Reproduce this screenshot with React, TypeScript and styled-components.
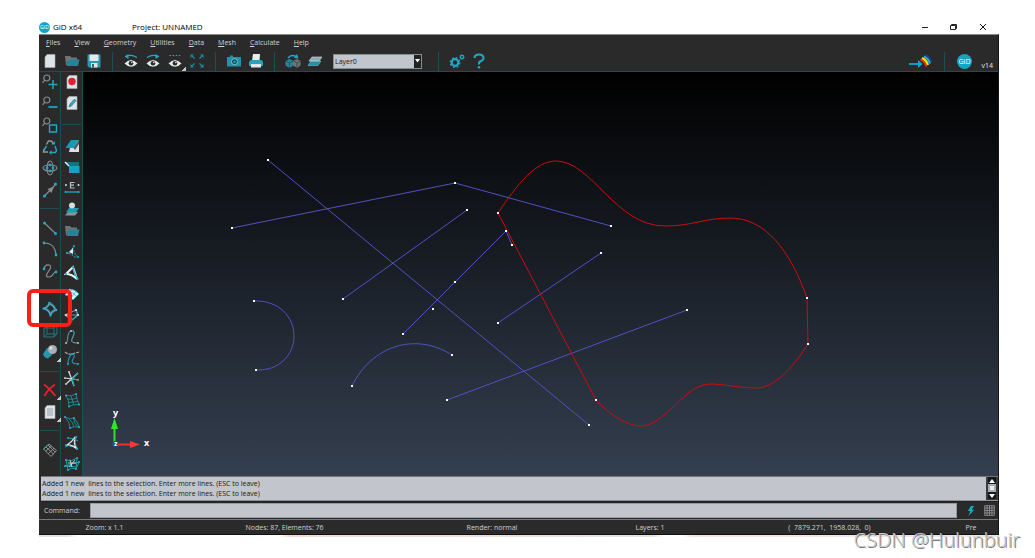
import React from "react";
import styled, { createGlobalStyle } from "styled-components";

const teal = "#1fa9c4";
const edge = "#1d4d58";
const grey = "#858b90";

const GlobalStyle = createGlobalStyle`
  * { box-sizing: border-box; }
  body { margin: 0; background: #fff; font-family: "Open Sans", "Noto Sans", sans-serif; font-size: 7px; color: #d0d2d6; }
  button, input, select { font: inherit; color: inherit; }
`;

const Page = styled.div`
  position: relative;
  padding: 20px 36px 20px 39px;
`;
const TitleBar = styled.header`
  display: flex;
  align-items: center;
  height: 14px;
  color: #000;
  font-size: 8px;
  line-height: 14px;
`;
const AppName = styled.span`
  display: flex;
  align-items: center;
  gap: 3px;
  width: 93px;
`;
const ProjectName = styled.span`
  flex: 1;
`;
const WindowButtons = styled.div`
  display: flex;
  gap: 9px;
  padding-right: 6px;
`;
const WindowButton = styled.button`
  display: grid;
  place-items: center;
  width: 20px;
  height: 14px;
  padding: 0;
  border: 0;
  background: none;
`;
const Frame = styled.main`
  background: #2a2a2a;
  border-top: 1px solid #858a8c;
  border-right: 1px solid #161616;
`;
const MenuBar = styled.nav`
  display: flex;
  gap: 14px;
  height: 16px;
  padding-left: 7px;
  line-height: 16px;
`;
const MenuLink = styled.a`
  color: #d0d2d6;
  text-decoration: none;
`;
const Toolbar = styled.div`
  display: flex;
  align-items: center;
  height: 21px;
  border-bottom: 1px solid ${edge};
`;
const ToolButton = styled.button<{ $more?: boolean }>`
  display: grid;
  place-items: center;
  width: 22px;
  height: 20px;
  padding: 0;
  border: 0;
  background: ${(p) =>
    p.$more
      ? "linear-gradient(135deg, transparent 50%, #c4c6c8 50%) right bottom / 4px 4px no-repeat"
      : "none"};
  svg { display: block; }
`;
const Divider = styled.span`
  width: 15px;
  height: 19px;
  background: linear-gradient(${edge}, ${edge}) center / 1px 100% no-repeat;
`;
const LayerPicker = styled.div`
  position: relative;
  width: 89px;
  height: 15px;
  margin: 0 9px 0 7px;
  border: 1px solid #8a8d92;
  background: #c2c5cb;
`;
const LayerSelect = styled.select`
  display: block;
  width: 100%;
  height: 13px;
  padding: 0 1px;
  border: 0;
  appearance: none;
  background: none;
  color: #16181c;
`;
const PickerArrow = styled.span`
  position: absolute;
  top: 0;
  right: 0;
  display: grid;
  place-items: center;
  width: 7px;
  height: 13px;
  background: #222;
  pointer-events: none;
`;
const ToolbarEnd = styled.div`
  display: flex;
  align-items: center;
  gap: 1px;
  margin-left: auto;
  padding-right: 5px;
`;
const Version = styled.span`
  align-self: flex-end;
  margin-left: 5px;
  line-height: 10px;
  color: #e4e6e8;
`;
const Workspace = styled.div`
  display: grid;
  grid-template-columns: 22px 22px 1fr;
  background: #2a2a2a;
`;
const ToolColumn = styled.div<{ $end: number }>`
  display: flex;
  flex-direction: column;
  align-items: center;
  justify-content: space-between;
  height: 404px;
  padding: 0 0 ${(p) => p.$end}px;
  border-right: 1px solid ${edge};
`;
const Rule = styled.span<{ $height: number }>`
  width: 19px;
  height: ${(p) => p.$height}px;
  background: linear-gradient(${edge}, ${edge}) center / 100% 1px no-repeat;
`;
const Canvas = styled.div`
  min-width: 0;
  background: linear-gradient(#000, #343f4f);
  svg { display: block; width: 100%; height: 404px; }
`;
const LogPanel = styled.section`
  display: flex;
  height: 25px;
  margin-left: 2px;
  border-top: 1px solid #72767e;
  border-bottom: 1px solid #8f9299;
  background: #c2c5cb;
  color: #16181c;
`;
const LogLines = styled.div`
  flex: 1;
  padding: 2px 0 0 1px;
  line-height: 10px;
  white-space: pre;
`;
const ScrollBar = styled.div`
  display: flex;
  flex-direction: column;
  align-items: center;
  width: 12px;
  padding: 0 2px;
  background: #3a3b3e;
`;
const ScrollButton = styled.button`
  display: grid;
  place-items: center;
  width: 8px;
  height: 7px;
  padding: 0;
  border: 0;
  background: #17181a;
`;
const Thumb = styled.span`
  width: 8px;
  height: 8px;
  border: 2px solid #a9adb3;
  background: #eceff2;
`;
const CommandRow = styled.div`
  display: flex;
  align-items: center;
  height: 18px;
  padding: 1px 0 1px 5px;
  border-top: 1px solid #1e1f20;
`;
const CommandLabel = styled.label`
  width: 46px;
`;
const CommandInput = styled.input`
  flex: 1;
  min-width: 0;
  height: 15px;
  padding: 0 2px;
  border: 1px solid #96999f;
  border-radius: 0;
  background: #c2c5cb;
  color: #16181c;
`;
const CommandTools = styled.div`
  display: flex;
  width: 41px;
  padding-left: 3px;
  button:first-child { width: 21px; }
  button:last-child { width: 16px; }
`;
const StatusBar = styled.footer`
  display: grid;
  grid-template-columns: 131fr 229fr 186fr 130fr 229fr 54fr;
  height: 16px;
  border-top: 1px solid #77797b;
  border-bottom: 1px solid #111;
  line-height: 15px;
  text-align: center;
  white-space: pre;
`;
const Strip = styled.div`
  height: 2px;
  background: linear-gradient(90deg, #e4e2e2 3%, #fff 4% 25%, #f3dcd6 26% 40%, #e2e2e2 64%, #fff 65% 67%, #f5e4e2 68% 80%, #e8e8e8);
`;
const Highlight = styled.div`
  position: absolute;
  left: 27px;
  top: 289px;
  width: 45px;
  height: 38px;
  border: 4px solid #fb2015;
  border-radius: 6px;
  pointer-events: none;
`;
const Watermark = styled.span`
  position: absolute;
  right: 15px;
  top: 526px;
  font-family: "Noto Sans", sans-serif;
  font-size: 20px;
  font-weight: 300;
  line-height: 27px;
  color: #c9c9c9;
  text-shadow: 1px 1px 0 #77797b;
`;

type Art = { children: React.ReactNode; size?: number };
const Icon = ({ children, size = 16 }: Art) => (
  <svg width={size} height={size} viewBox="0 0 16 16" fill="none" stroke={teal} strokeWidth="1.2" aria-hidden="true">
    {children}
  </svg>
);

/* Small round handles drawn on the ends and corners of a shape */
const Nodes = ({ at, color = teal, r = 1.1 }: { at: number[][]; color?: string; r?: number }) => (
  <g fill={color} stroke="none">
    {at.map(([x, y]) => (
      <circle key={`${x}-${y}`} cx={x} cy={y} r={r} />
    ))}
  </g>
);

const Eye = () => (
  <>
    <path d="M1.500 10.500Q8 3.500 14.500 10.500Q8 17 1.500 10.500Z" fill="#e6eaec" stroke="none" />
    <circle cx="8" cy="10.200" r="2.300" fill="#2a2a2a" stroke="none" />
    <circle cx="8.800" cy="9.500" r=".8" fill="#e6eaec" stroke="none" />
  </>
);
const Sheet = ({ children }: { children?: React.ReactNode }) => (
  <>
    <path d="M5 1.500H13V14.500H3V4Z" fill="#dde3e7" stroke="#aab2b6" strokeWidth=".6" />
    {children}
  </>
);
const Folder = () => (
  <>
    <path d="M1 3H6L7.500 4.500H13V8H4L3 12H2Z" fill="#6f7476" stroke="none" />
    <path d="M4.500 6.500H15.500L14 13H2.500Z" fill="#25849a" stroke="none" />
  </>
);
const Lens = () => (
  <g stroke={grey}>
    <circle cx="4.800" cy="4" r="3" />
    <path d="M2.800 6.200L.5 8.800" />
  </g>
);
const Logo = ({ size }: { size: number }) => (
  <svg width={size} height={size} viewBox="0 0 16 16" aria-hidden="true">
    <circle cx="8" cy="8" r="8" fill="#12a5c4" />
    <text x="8" y="10.700" fontSize="7.500" fontFamily="Open Sans, sans-serif" fill="#fff" textAnchor="middle">GiD</text>
  </svg>
);

type Tool = { name: string; art: React.ReactNode; more?: boolean } | null;

const fileTools: Tool[] = [
  { name: "New", art: <Sheet /> },
  { name: "Open", art: <Folder /> },
  {
    name: "Save",
    art: (
      <>
        <path d="M1.500 1.500H14.500V14.500H3L1.500 13Z" fill="#2796ae" stroke="none" />
        <path d="M3.500 1.500H12.500V8H3.500Z" fill="#e3e9eb" stroke="none" />
        <path d="M5 10H11.500V14.500H5Z" fill="#dce2e4" stroke="none" />
        <path d="M6 11H8V14.500H6Z" fill="#246b7a" stroke="none" />
      </>
    ),
  },
  null,
  { name: "Previous view", art: <><path d="M3 3.500Q8 1 14 4.500" /><path d="M1.500 3.500L5.500 1V6Z" fill={teal} stroke="none" /><Eye /></> },
  { name: "Next view", art: <><path d="M2 4.500Q8 1 13 3.500" /><path d="M14.500 3.500L10.500 1V6Z" fill={teal} stroke="none" /><Eye /></> },
  { name: "Stored views", more: true, art: <><path d="M2.500 2.500H14" strokeDasharray="1.600 1.500" /><Eye /></> },
  {
    name: "Full screen",
    art: (
      <>
        <path d="M3 3L5.500 5.500M13 3L10.500 5.500M3 13L5.500 10.500M13 13L10.500 10.500" stroke="#1b8ba1" />
        <path d="M1.500 1.500H5L1.500 5ZM14.500 1.500H11L14.500 5ZM1.500 14.500H5L1.500 11ZM14.500 14.500H11L14.500 11Z" fill="#1b8ba1" stroke="none" />
      </>
    ),
  },
  null,
  {
    name: "Snapshot",
    art: (
      <>
        <path d="M1 4H4V2.500H7V4H15V13.500H1Z" fill="#1f93ad" stroke="none" />
        <circle cx="8.500" cy="8.700" r="3" fill="#15424d" stroke="#8fd0dc" strokeWidth=".9" />
        <circle cx="8.500" cy="8.700" r="1.200" fill={teal} stroke="none" />
      </>
    ),
  },
  {
    name: "Print",
    art: (
      <>
        <path d="M5 1H12L11.500 8H4Z" fill="#e8ecee" stroke="none" />
        <path d="M3 7H13.500L15 9V13H1V9Z" fill="#2da0b8" stroke="none" />
        <path d="M3 11H13V14.500H3Z" fill="#dfe6e8" stroke="none" />
      </>
    ),
  },
  null,
  {
    name: "Change objects",
    art: (
      <>
        <path d="M3 5Q6 1 11 3.500" strokeWidth="1.500" />
        <path d="M13.500 5.500L9 5L12 1Z" fill={teal} stroke="none" />
        <path d="M.5 8L4.500 6L8.500 8V12.500L4.500 15L.5 12.500Z" fill="#20889f" stroke="none" />
        <path d="M8 8L12 6L15.500 8V12.500L12 15L8 12.500Z" fill="#6e7375" stroke="none" />
        <path d="M8.500 8L12 10L15.500 8M12 10V15M1 8L4.500 10L8 8M4.500 10V15" stroke="#2c4147" strokeWidth=".7" />
      </>
    ),
  },
  {
    name: "Layers",
    art: (
      <>
        <path d="M4 8H14L11 12.500H1Z" fill="#248fa7" stroke="#72bccb" strokeWidth=".6" />
        <path d="M5 4H15L12 8H2Z" fill="#91a9b3" stroke="#d5e2e7" strokeWidth=".6" />
      </>
    ),
  },
];

const viewTools: Tool[] = [
  { name: "Zoom in", art: <><Lens /><path d="M11 6V15M6.500 10.500H15.500" strokeWidth="1.500" /></> },
  { name: "Zoom out", art: <><Lens /><path d="M6.500 11H15.500" strokeWidth="1.700" /></> },
  { name: "Zoom frame", art: <><Lens /><path d="M7.500 8H14.500V15H7.500Z" strokeWidth="1.400" /></> },
  {
    name: "Redraw",
    art: (
      <>
        <path d="M4.500 5.500L6.500 2H9.500L11.500 5M2 10L1.500 13H6" stroke="#92989b" strokeWidth="1.500" />
        <path d="M13 7L14.500 11.500L13.500 13.500H9.500M4.500 7L2 11" strokeWidth="1.500" />
        <path d="M9.500 11V16L7 13.500ZM9.500 5.500H13V2Z" fill={teal} stroke="none" />
      </>
    ),
  },
  {
    name: "Rotate",
    art: (
      <>
        <ellipse cx="8" cy="8" rx="3" ry="7" stroke={grey} />
        <ellipse cx="8" cy="8" rx="7" ry="3" stroke={grey} />
        <Nodes at={[[8, 5], [11, 8], [8, 11], [5, 8]]} r={1.4} />
      </>
    ),
  },
  { name: "Pan", art: <><path d="M3 13.500L13 3" stroke={grey} /><path d="M12 4.500L5.500 7L9.500 11Z" fill={grey} stroke="none" /><Nodes at={[[2.500, 14], [13.500, 2]]} r={1.6} /></> },
  null,
  { name: "Line", art: <><path d="M2.500 3L13 13" stroke={grey} /><Nodes at={[[2.500, 3], [13.500, 13.500]]} r={1.5} /></> },
  { name: "Arc", art: <><path d="M2 2Q13 2 14 14" stroke={grey} /><Nodes at={[[2, 2], [14, 14]]} r={1.4} /></> },
  { name: "NURBS line", art: <><path d="M2 6C3 0 11 1 8 6S2 14 7 14S10 9 14 9" stroke={grey} /><Nodes at={[[2, 6], [14, 9]]} r={1.4} /></> },
  null,
  { name: "NURBS surface", art: <><path d="M2.500 7.500Q6 6 7.500 2.500Q12 4 13.500 9Q10 10 8.500 13.500Q7 9 2.500 7.500Z" stroke="#168197" strokeWidth="2.400" /><path d="M2.500 7.500Q6 6 7.500 2.500Q12 4 13.500 9Q10 10 8.500 13.500Q7 9 2.500 7.500Z" stroke="#a3a7aa" strokeWidth="1" /><Nodes at={[[7.500, 2], [14, 9], [8.500, 14], [2, 7.500]]} r={1.3} /></> },
  { name: "Volume", art: <path d="M2 5L5 2H15V11L12 14H2ZM2 5H12V14M12 5L15 2M5 2V11H15M5 11L2 14" stroke="#297b8b" strokeWidth=".9" /> },
  {
    name: "Create object",
    more: true,
    art: (
      <>
        <path d="M1 10L5 4H10V11L6 14.500Q2 14 1 10Z" fill="#2795ad" stroke="none" />
        <circle cx="10.500" cy="5.500" r="4.500" fill="#a8afb3" stroke="none" />
        <circle cx="9" cy="4" r="1.600" fill="#dde2e4" stroke="none" />
      </>
    ),
  },
  null,
  { name: "Delete", more: true, art: <path d="M2 2.500Q7 6 13.500 14M13 2.500Q6 7 2.500 14" stroke="#e0222f" strokeWidth="1.900" /> },
  { name: "List", more: true, art: <Sheet><path d="M5 5H11M5 7H11M5 9H11M5 11H11" stroke="#71868f" strokeWidth=".7" /></Sheet> },
  null,
  { name: "Mesh", art: <><path d="M1.500 7L7 2L14.500 8.500L9 14.500ZM4 5L11.500 12M6 3L13 10M4 9L9.500 4M6.500 11.500L12 6" stroke="#9a9fa2" strokeWidth=".9" /><path d="M1.500 7L7 2" strokeWidth=".9" /></> },
];

const macroTools: Tool[] = [
  { name: "Record macro", art: <Sheet><circle cx="8" cy="7.500" r="3.700" fill="#e3202f" stroke="none" /></Sheet> },
  { name: "Edit macro", art: <Sheet><path d="M5 12L6 9L10.500 4L12 5.500L7.500 11Z" fill="#39a8c0" stroke="#176a7e" strokeWidth=".6" /></Sheet> },
  null,
  { name: "Clip plane", art: <><path d="M8 2H15V14H5Z" fill="#dce2e4" stroke="none" /><path d="M7 2H15L9.500 10H1.500Z" fill="#159bb6" stroke="none" /><path d="M9.500 10L15 2V6L11 12Z" fill="#4d585c" stroke="none" /></> },
  { name: "Zoom to surface", art: <><path d="M1 3H15V14H5V6Z" fill="#176f82" stroke="none" /><path d="M5 7H15.500V14H5Z" fill="#18a1bd" stroke="none" /><path d="M1 3L5 7" stroke="#eef1f2" strokeWidth="1.500" /></> },
  {
    name: "Edge length",
    art: (
      <>
        <path d="M10.500 2.500H6.500V8H10.500M6.500 5.200H10" stroke="#b9bec0" strokeWidth="1.200" />
        <Nodes at={[[2, 5], [14.500, 5]]} color="#e8ebec" r={0.9} />
        <path d="M1 12H15.500" strokeWidth="1.300" /><Nodes at={[[1.500, 12], [14.500, 12]]} />
      </>
    ),
  },
  { name: "Send to layer", art: <><path d="M4 11H14L11 14.500H1Z" fill="#86959b" stroke="none" /><path d="M5 7H15L12 11.500H2Z" fill="#1c9bb5" stroke="none" /><circle cx="8" cy="4.500" r="3" fill="#d6dde0" stroke="none" /></> },
  { name: "Groups", art: <Folder /> },
  { name: "Divide lines", art: <><path d="M4 10L10 3M9 3Q10 10 14 13M2 9Q7 9 12 14" stroke="#2b8294" strokeDasharray="2 1" /><path d="M5 8L9 4V10Z" fill="#e7edef" stroke="none" /><Nodes at={[[10, 2], [14, 13], [3, 9]]} /></> },
  { name: "Divide surface", art: <><path d="M2 9L9 2L13 14Q8 9 2 9Z" stroke="#e9f4f6" strokeWidth="2" /><path d="M9 2Q10 9 14 14" /><Nodes at={[[2, 9], [9, 2], [13.500, 14]]} /></> },
  { name: "Surface mesh", art: <><path d="M5 3Q11 3 15 8L9 14Q5 9 1 9Z" fill="#dbf2f6" stroke={teal} strokeWidth=".8" /><path d="M4 5Q9 6 13 11M8 3L4 10M12 5L7 12" strokeWidth=".7" /></> },
  { name: "Intersect surfaces", art: <><path d="M1 8L12 3L14 8L8 13ZM1 8H14" stroke={grey} /><path d="M12 3L14 8L8 13" /><Nodes at={[[2, 8], [12, 3], [14, 8]]} color="#dbe6e9" /></> },
  { name: "Join lines", art: <><path d="M2 14C5 13 2 3 7 2S10 6 8 10S12 14 14 14" stroke="#53929f" /><Nodes at={[[2, 14], [14, 14], [7, 2]]} color="#aab3b7" /></> },
  { name: "Split line", art: <><path d="M1 2Q5 5 8 4T15 2" stroke="#a2a9ac" strokeDasharray="3 1" /><path d="M4 14Q4 7 8 4Q12 4 9 9T14 14" stroke="#268da2" /><Nodes at={[[8, 4], [4, 14], [14, 14]]} /></> },
  { name: "Intersect lines", art: <><path d="M5 1L10 15M1 7L15 9M2 13L14 2" stroke="#dde1e3" /><path d="M8 8L15 9M8 8L14 2M8 8L10 15" /><Nodes at={[[5, 1], [2, 13], [1, 7]]} color="#bac0c3" /></> },
  { name: "Map grid", art: <><path d="M2 3.500Q7 5 12 2Q13 8 15 12.500Q9 12 5 14.500Q5 8 2 3.500M3.500 7Q8 8 13 6M4.500 10.500Q9 10 14 9.500M7 4L10 13" stroke="#1e8ea4" strokeWidth=".9" /><Nodes at={[[2, 3.500], [12, 2], [15, 12.500], [5, 14.500]]} /></> },
  { name: "Trim grid", art: <><path d="M1 3Q6 6 10 4Q14 8 15 13Q9 12 6 14Q6 8 1 3M5 5Q9 8 10 13M10 4Q9 8 13 12" stroke="#1e8ea4" strokeWidth=".9" /><Nodes at={[[1, 3], [10, 4], [15, 13], [6, 14]]} /></> },
  { name: "Trim surface", art: <><path d="M11 2Q9 9 13 14Q9 10 3 10Q8 7 11 2" stroke="#e1e6e8" strokeWidth="1.300" /><path d="M4 3Q10 3 14 6M13 1Q9 8 14 14M1 12Q5 9 8 12" strokeWidth=".9" /><Nodes at={[[12, 2], [2, 10], [13, 14], [4, 3]]} /></> },
  { name: "Intersect meshes", art: <><path d="M2 4Q8 6 13 2L12 13Q7 11 4 14ZM1 10L15 6L13 11Z" strokeWidth=".9" /><path d="M6 4L8 11M11 4L5 11M4 7H12" stroke="#d5dcdf" strokeWidth=".9" /><Nodes at={[[2, 4], [13, 2], [12, 13], [4, 14], [15, 6], [1, 10]]} /></> },
];

const Tools = ({ tools, rule }: { tools: Tool[]; rule: React.ReactNode }) => (
  <>
    {tools.map((tool, i) =>
      tool ? (
        <ToolButton key={tool.name} aria-label={tool.name} $more={tool.more}>
          <Icon>{tool.art}</Icon>
        </ToolButton>
      ) : (
        <React.Fragment key={i}>{rule}</React.Fragment>
      )
    )}
  </>
);

const points = [
  [268, 160], [589, 425], [232, 228], [455, 183], [611, 226], [467, 210], [343, 299], [403, 334], [455, 282],
  [506, 231], [512, 245], [498, 213], [498, 323], [601, 253], [447, 400], [687, 310], [433, 309], [254, 301],
  [256, 370], [352, 386], [452, 355], [596, 400], [807, 298], [808, 344],
];

const Drawing = () => (
  <svg viewBox="83 72 915 404" role="img" aria-label="Geometry view">
    <g fill="none" stroke="#5150c4" strokeWidth="1">
      <path d="M268 160L589 425M232 228L455 183L611 226M467 210L343 299M403 334L455 282L506 231L512 245M498 323L601 253M447 400L687 310" />
      <path d="M254 301C279 300 294 317 294 336S279 371 256 370" />
      <path d="M352 386C372 345 416 332 452 355" />
    </g>
    <path
      d="M596 400L498 213C517 185 535 161 556 161C592 161 615 226 665 226C692 226 705 218 730 218C765 218 790 250 807 298L808 344C796 363 776 388 757 388C738 388 725 384 710 384C685 384 665 426 641 426C628 426 611 416 596 400Z"
      fill="none"
      stroke="#d10a0e"
    />
    <g fill="#fff">
      {points.map(([x, y]) => (
        <rect key={`${x}-${y}`} x={x - 1} y={y - 1} width="2" height="2" />
      ))}
    </g>
    <path d="M114.500 443V427" stroke="#35dd2d" strokeWidth="2" />
    <path d="M114.500 418L118 429H111Z" fill="#35e52d" />
    <path d="M116 444.500H131" stroke="#e83330" strokeWidth="2" />
    <path d="M140 444.500L130 441V448Z" fill="#f03b34" />
    <circle cx="115" cy="444" r="3" fill="#28506e" />
    <g fill="#fff" fontFamily="Open Sans, sans-serif" fontSize="9" fontWeight="700">
      <text x="113" y="416">y</text>
      <text x="144" y="446">x</text>
      <text x="114" y="446" fontSize="7">z</text>
    </g>
  </svg>
);

const menus = ["Files", "View", "Geometry", "Utilities", "Data", "Mesh", "Calculate", "Help"];
const message = "Added 1 new  lines to the selection. Enter more lines. (ESC to leave)";

const MenuItem = ({ label }: { label: string }) => (
  <MenuLink href="#">
    <u>{label[0]}</u>
    {label.slice(1)}
  </MenuLink>
);

export default function App() {
  return (
    <Page>
      <GlobalStyle />
      <TitleBar>
        <AppName><Logo size={11} />GiD x64</AppName>
        <ProjectName>Project: UNNAMED</ProjectName>
        <WindowButtons>
          <WindowButton aria-label="Minimize">
            <svg width="8" height="8" stroke="#222"><path d="M1 4.500H7" /></svg>
          </WindowButton>
          <WindowButton aria-label="Restore">
            <svg width="8" height="8" fill="none" stroke="#222"><path d="M.5 2.500H5.500V6.500H.5ZM1.500 2.500V1.500H6.500V5.500H5.500" /></svg>
          </WindowButton>
          <WindowButton aria-label="Close">
            <svg width="8" height="8" stroke="#111"><path d="M1 1L7 7M7 1L1 7" /></svg>
          </WindowButton>
        </WindowButtons>
      </TitleBar>
      <Frame>
        <MenuBar>
          {menus.map((m) => (
            <MenuItem key={m} label={m} />
          ))}
        </MenuBar>
        <Toolbar>
          <Tools tools={fileTools} rule={<Divider />} />
          <LayerPicker>
            <LayerSelect aria-label="Layer" defaultValue="Layer0">
              <option>Layer0</option>
            </LayerSelect>
            <PickerArrow><svg width="5" height="4"><path d="M0 0H5L2.500 3.500Z" fill="#fff" /></svg></PickerArrow>
          </LayerPicker>
          <Divider />
          <ToolButton aria-label="Preferences">
            <Icon>
              <circle cx="6" cy="9.500" r="3.300" strokeWidth="2.200" />
              <circle cx="6" cy="9.500" r="4.900" strokeWidth="1.200" strokeDasharray="2 1.850" />
              <circle cx="13" cy="4" r="1.600" strokeWidth="1.200" />
              <circle cx="13" cy="4" r="2.400" strokeWidth=".7" strokeDasharray="1 .9" />
            </Icon>
          </ToolButton>
          <ToolButton aria-label="Help">
            <Icon>
              <path d="M3.500 5Q3.500 1.500 8 1.500T12.500 5Q12.500 7 10 8T8 11.500" strokeWidth="2" />
              <circle cx="8" cy="14.300" r="1.300" fill={teal} stroke="none" />
            </Icon>
          </ToolButton>
          <ToolbarEnd>
            <svg width="28" height="16" viewBox="0 0 28 16" fill="none" aria-hidden="true">
              <path d="M1 11H11" stroke="#12a9cc" strokeWidth="1.800" />
              <path d="M14.500 11L10 7V15Z" fill="#12a9cc" />
              <path d="M12.500 6.500Q17 8.500 18.500 13.500" stroke="#e72c25" strokeWidth="2" />
              <path d="M14 5Q18.500 7 20 12" stroke="#ffe10a" strokeWidth="2.200" />
              <path d="M16 3.500Q20.500 5.500 22 10.500" stroke="#20a9ef" strokeWidth="2.200" />
              <path d="M17.500 2Q22 4 23.500 9" stroke="#1b3f8f" strokeWidth="1.500" />
            </svg>
            <Divider />
            <ToolButton aria-label="About GiD"><Logo size={15} /></ToolButton>
            <Version>v14</Version>
          </ToolbarEnd>
        </Toolbar>
        <Workspace>
          <ToolColumn $end={16}>
            <Tools tools={viewTools} rule={<Rule $height={15} />} />
          </ToolColumn>
          <ToolColumn $end={2}>
            <Tools tools={macroTools} rule={<Rule $height={20} />} />
          </ToolColumn>
          <Canvas><Drawing /></Canvas>
        </Workspace>
        <LogPanel>
          <LogLines role="log">
            <div>{message}</div>
            <div>{message}</div>
          </LogLines>
          <ScrollBar>
            <ScrollButton aria-label="Scroll up"><svg width="6" height="4"><path d="M0 4L3 0L6 4Z" fill="#fff" /></svg></ScrollButton>
            <Thumb />
            <ScrollButton aria-label="Scroll down"><svg width="6" height="4"><path d="M0 0L3 4L6 0Z" fill="#fff" /></svg></ScrollButton>
          </ScrollBar>
        </LogPanel>
        <CommandRow>
          <CommandLabel htmlFor="command">Command:</CommandLabel>
          <CommandInput id="command" />
          <CommandTools>
            <ToolButton aria-label="Run">
              <Icon size={10}><path d="M8 0L3 8H7L4 16L13 6H9L13 0Z" fill={teal} stroke="none" /></Icon>
            </ToolButton>
            <ToolButton aria-label="Grid">
              <Icon size={11}><path d="M1 1H15V15H1ZM4.500 1V15M8 1V15M11.500 1V15M1 4.500H15M1 8H15M1 11.500H15" stroke="#96999b" /></Icon>
            </ToolButton>
          </CommandTools>
        </CommandRow>
        <StatusBar>
          <span>Zoom: x 1.1</span>
          <span>Nodes: 87, Elements: 76</span>
          <span>Render: normal</span>
          <span>Layers: 1</span>
          <span>(  7879.271,  1958.028,  0)</span>
          <span>Pre</span>
        </StatusBar>
      </Frame>
      <Strip />
      <Highlight />
      <Watermark>CSDN @Hulunbuir</Watermark>
    </Page>
  );
}
